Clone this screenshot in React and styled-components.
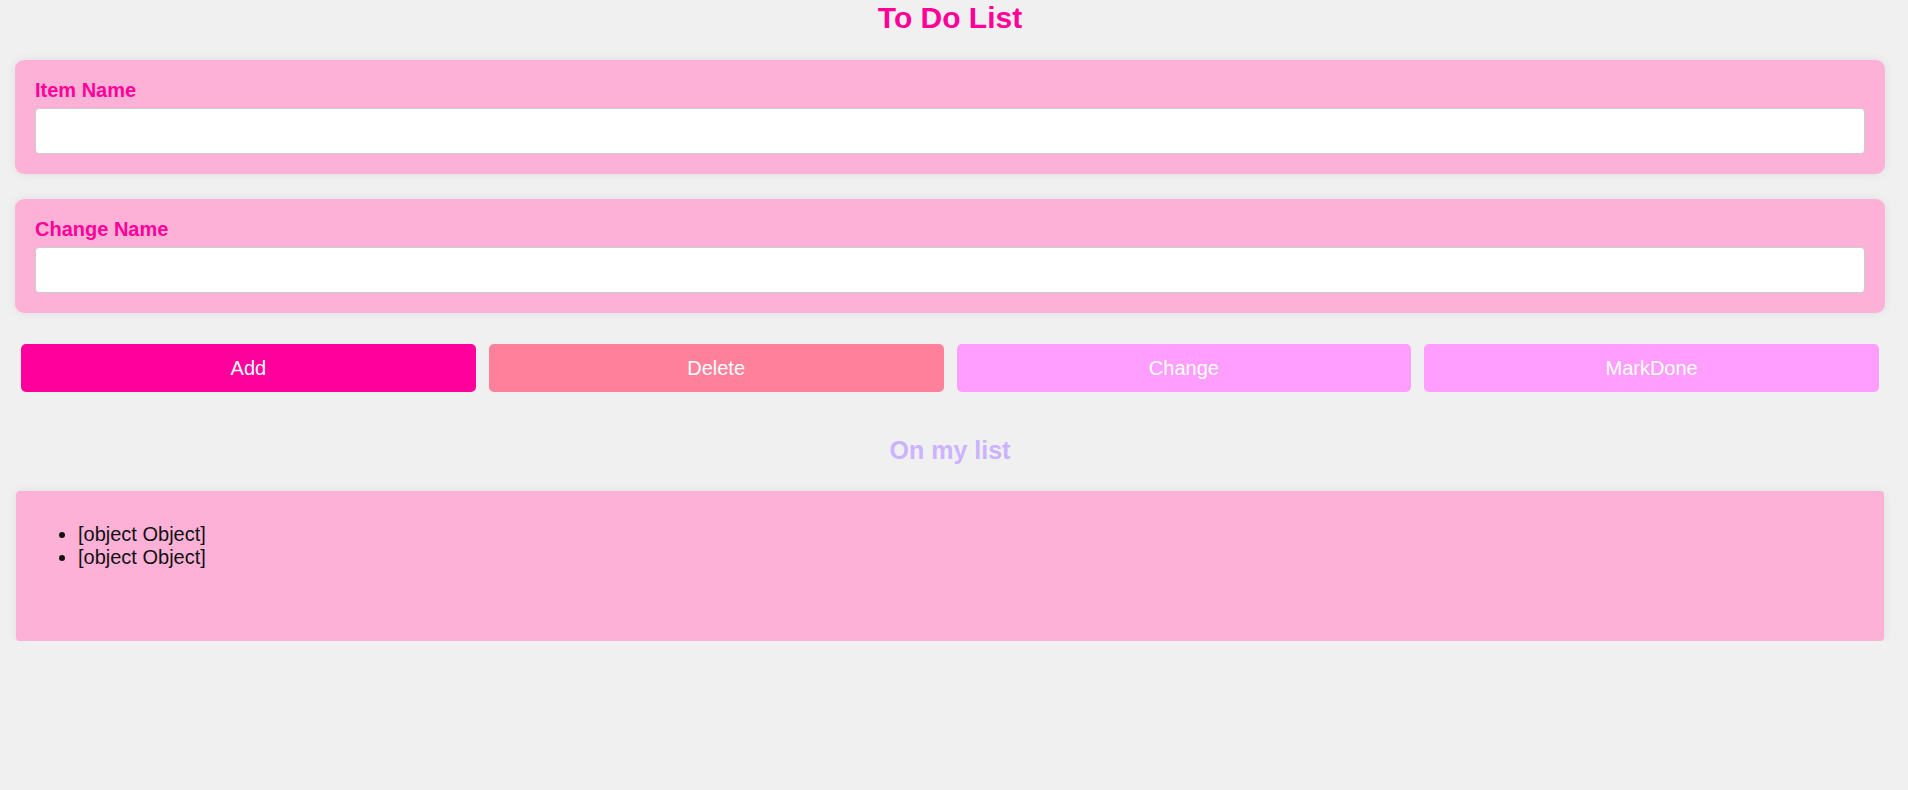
import React, { useState } from 'react'
import styled, { createGlobalStyle } from 'styled-components'

const GlobalStyle = createGlobalStyle`
    body {
        margin: 0;
        background-color: #f0f0f0;
        font-family: "Liberation Sans", Arial, sans-serif;
    }
`

const Container = styled.div`
    width: 1900px;
`
const Title = styled.h1`
    margin: 0;
    text-align: center;
    font-size: 30px;
    line-height: 35px;
    font-weight: 700;
    color: #ff0099;
`
const Card = styled.div`
    margin: 25px 15px;
    padding: 19px 20px 20px;
    background-color: #feb1d7;
    border-radius: 9px;
    box-shadow: 0 0 10px rgba(0, 0, 0, 0.08);
`
const Label = styled.label`
    display: block;
    font-size: 20px;
    font-weight: 700;
    color: #ff0099;
    margin-bottom: 6px;
`
const Input = styled.input`
    display: block;
    box-sizing: border-box;
    width: 100%;
    height: 46px;
    padding: 0 12px;
    font-size: 20px;
    font-family: inherit;
    background-color: white;
    border: 1px solid #cccccc;
    border-radius: 4px;
    outline: none;
`
const Buttons = styled.div`
    display: flex;
    gap: 13px;
    padding: 0 21px;
    margin-top: 31px;
`
const Button = styled.button`
    flex: 1;
    height: 48px;
    border: none;
    border-radius: 5px;
    font-size: 20px;
    font-family: inherit;
    color: white;
    cursor: pointer;
    background-color: ${props => props.color};
`
const SubTitle = styled.h2`
    margin: 44px 0 26px;
    text-align: center;
    font-size: 25px;
    font-weight: 700;
    color: #ccb3ff;
`
const ListBox = styled.div`
    box-sizing: border-box;
    height: 150px;
    margin: 0 16px;
    padding: 12px 13px;
    background-color: #feb1d7;
    border-radius: 4px;
    box-shadow: 0 0 10px rgba(0, 0, 0, 0.08);
`
const List = styled.ul`
    margin: 20px 0;
    padding-left: 49px;
    font-size: 20px;
    line-height: 23px;
    color: #111;
`

const App = () => {
    const [name, setName] = useState('')
    const [newName, setNewName] = useState('')
    const items = [{ name: 'a' }, { name: 'b' }]

    return (
        <Container>
            <GlobalStyle />
            <Title>To Do List</Title>
            <Card>
                <Label>Item Name</Label>
                <Input value={name} onChange={e => setName(e.target.value)} />
            </Card>
            <Card>
                <Label>Change Name</Label>
                <Input value={newName} onChange={e => setNewName(e.target.value)} />
            </Card>
            <Buttons>
                <Button color="#ff009d">Add</Button>
                <Button color="#ff809b">Delete</Button>
                <Button color="#ff9eff">Change</Button>
                <Button color="#ff9eff">MarkDone</Button>
            </Buttons>
            <SubTitle>On my list</SubTitle>
            <ListBox>
                <List>
                    {items.map((item, i) => (
                        <li key={i}>{String(item)}</li>
                    ))}
                </List>
            </ListBox>
        </Container>
    )
}

export default App
